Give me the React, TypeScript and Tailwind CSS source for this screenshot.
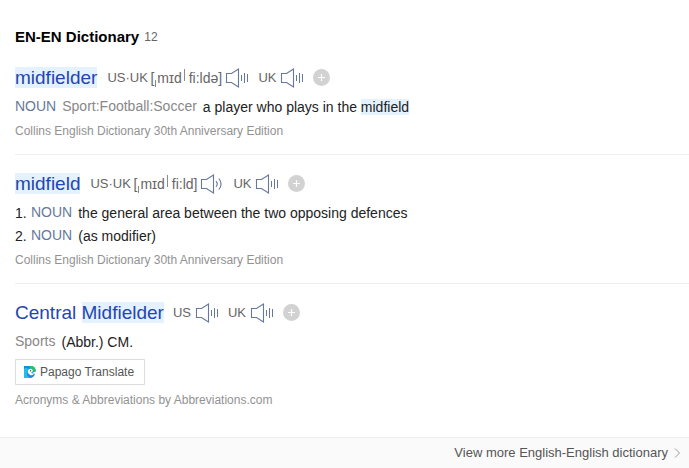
import type { ReactNode } from "react";

function Speaker({ wave = false }: { wave?: boolean }) {
  return (
    <svg className="block h-[20px] w-[24px] shrink-0" viewBox="0 0 24 20" fill="none" stroke="#66789b">
      <path d="M1.5 5.5h5L13.5 1v18l-7-4.5h-5z" strokeWidth="1.1" />
      {wave ? (
        <path d="M16 7.2q2.5 2.8 0 5.6M18.8 4.5q4.6 5.5 0 11" strokeWidth="1.1" />
      ) : (
        <path d="M16.5 7v6M19.5 5v10M22.5 6v8" strokeWidth="1" />
      )}
    </svg>
  );
}

function Plus() {
  return (
    <svg className="block size-[17px] shrink-0" viewBox="0 0 17 17">
      <circle cx="8.5" cy="8.5" r="8.5" fill="#d2d2d2" />
      <path d="M8.5 5v7M5 8.5h7" stroke="#fff" strokeWidth="1.2" />
    </svg>
  );
}

const Mark = ({ children }: { children: ReactNode }) => (
  <span className="bg-[#e3f2fe]">{children}</span>
);

const Noun = () => <span className="text-[#66789b]">NOUN</span>;

function Low() {
  return (
    <span className="relative inline-block h-[10px] w-[3px] text-transparent">
      <span className="absolute top-[7px] left-px h-[7px] w-px overflow-hidden bg-[#8a8a8a]">ˌ</span>
    </span>
  );
}

function High() {
  return (
    <span className="relative inline-block h-[10px] w-[7px] text-transparent">
      <span className="absolute -top-[4px] left-[2px] h-[12px] w-px overflow-hidden bg-[#8a8a8a]">ˈ</span>
    </span>
  );
}

function Source({ children }: { children: ReactNode }) {
  return <p className="h-[14px] text-[12px] leading-[14px] text-[#929292]">{children}</p>;
}

export default function App() {
  return (
    <main className="flex h-[468px] w-[689px] flex-col overflow-hidden bg-white font-['Liberation_Sans',Arial,sans-serif] text-[14px] leading-[20px] whitespace-nowrap text-[#222]">
      <header className="mt-[27px] flex h-[20px] items-center pl-[15px]">
        <h2 className="text-[15px] font-bold text-black">EN-EN Dictionary</h2>
        <span className="ml-[5px] text-[12px] text-[#666]">12</span>
      </header>

      <section className="ml-[15px] h-[108px] border-b border-[#eee] pt-[20px]">
        <div className="flex h-[21px] items-center">
          <h3 className="text-[19px] leading-[21px] text-[#2545b0]"><Mark>midfielder</Mark></h3>
          <span className="ml-[10px] w-[43px] text-[13px] text-[#666]">US·UK</span>
          <span className="w-[75px] text-[#666]">[<Low />mɪd<High />fi:ldə]</span>
          <Speaker />
          <span className="ml-[9px] w-[22px] text-[13px] text-[#666]">UK</span>
          <Speaker />
          <span className="ml-[9px]"><Plus /></span>
        </div>
        <div className="mt-[8px] flex h-[20px]">
          <Noun />
          <span className="ml-[6px] text-[#888]">Sport:Football:Soccer</span>
          <p className="ml-[6px] pt-px">a player who plays in the <Mark>midfield</Mark></p>
        </div>
        <div className="mt-[8px]"><Source>Collins English Dictionary 30th Anniversary Edition</Source></div>
      </section>

      <section className="ml-[15px] h-[129px] border-b border-[#eee] pt-[18px]">
        <div className="flex h-[21px] items-center">
          <h3 className="text-[19px] leading-[21px] text-[#2545b0]"><Mark>midfield</Mark></h3>
          <span className="ml-[10px] w-[43px] text-[13px] text-[#666]">US·UK</span>
          <span className="w-[67px] text-[#666]">[<Low />mɪd<High />fi:ld]</span>
          <Speaker wave />
          <span className="ml-[9px] w-[22px] text-[13px] text-[#666]">UK</span>
          <Speaker />
          <span className="ml-[9px]"><Plus /></span>
        </div>
        <ol className="mt-[8px]">
          <li className="flex h-[23px]"><span className="w-[16px] pt-px">1.</span><Noun /><span className="ml-[6px] pt-px">the general area between the two opposing defences</span></li>
          <li className="flex h-[23px]"><span className="w-[16px] pt-px">2.</span><Noun /><span className="ml-[6px] pt-px">(as modifier)</span></li>
        </ol>
        <div className="mt-[5px]"><Source>Collins English Dictionary 30th Anniversary Edition</Source></div>
      </section>

      <section className="ml-[15px] h-[153px] pt-[18px]">
        <div className="flex h-[21px] items-center">
          <h3 className="text-[19px] leading-[21px] text-[#2545b0]">Central <Mark>Midfielder</Mark></h3>
          <span className="ml-[9px] w-[22px] text-[13px] text-[#666]">US</span>
          <Speaker />
          <span className="ml-[9px] w-[22px] text-[13px] text-[#666]">UK</span>
          <Speaker />
          <span className="ml-[9px]"><Plus /></span>
        </div>
        <div className="mt-[8px] flex h-[20px]">
          <span className="text-[#888]">Sports</span>
          <span className="ml-[6px] pt-px">(Abbr.) CM.</span>
        </div>
        <button className="mt-[8px] flex h-[26px] w-[130px] items-center border border-[#ddd] pl-[8px] text-[12px] text-[#555]">
          <svg className="mr-[4px] size-[12px]" viewBox="0 0 12 12">
            <path d="M0 0h6.5q5 0 5.3 5.2L8 7l3 1q-1.500 4-5 4H0z" fill="#1687ef" />
            <path d="M5 0h1.500q5 0 5.300 5.200H8z" fill="#22c65b" />
            <path d="M0 3q2-2 4-1L3 9l3 3H0z" fill="#20bfe5" />
            <path d="M5 3q3-1 4 2L7 7l3 1q-2 2-4 1-4-3-1-6z" fill="#fff" />
            <circle cx="6.500" cy="4.800" r=".7" fill="#164" />
          </svg>
          Papago Translate
        </button>
        <div className="mt-[8px]"><Source>Acronyms &amp; Abbreviations by Abbreviations.com</Source></div>
      </section>

      <footer className="flex h-[31px] items-center justify-end border-t border-[#eee] bg-[#fafafa] pr-[8px] text-[#555]">
        <span className="text-[13px]">View more English-English dictionary</span>
        <svg className="ml-[6px] h-[10px] w-[7px]" viewBox="0 0 7 10" fill="none" stroke="#999">
          <path d="M1 .5 5.500 5 1 9.500" />
        </svg>
      </footer>
    </main>
  );
}
